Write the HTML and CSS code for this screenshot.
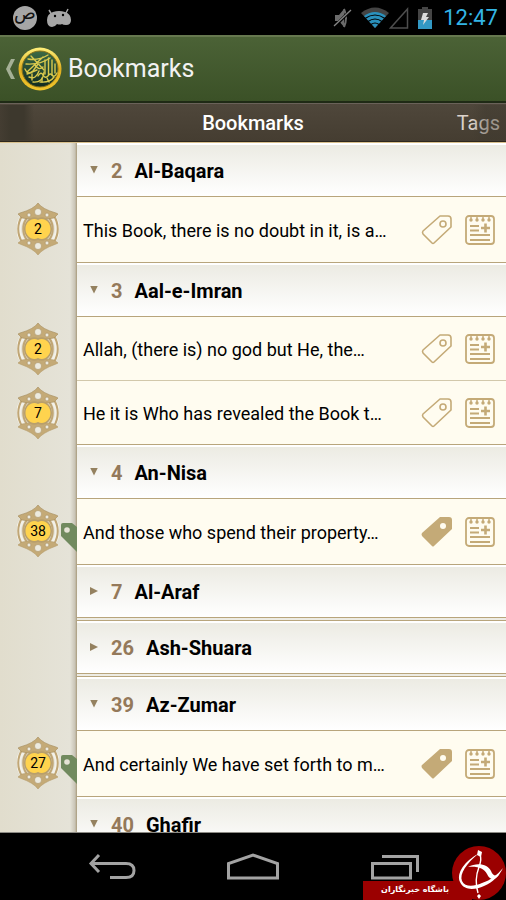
FILE: index.html
```html
<!DOCTYPE html>
<html lang="en">
<head>
    <meta charset="UTF-8">
    <meta name="viewport" content="width=device-width, initial-scale=1.0">
    <title>Bookmarks</title>
    <link rel="stylesheet" href="styles.css">
</head>
<body>
    <!-- shared icons -->
    <svg class="defs" width="0" height="0" aria-hidden="true">
        <symbol id="medal" viewBox="0 0 42 54">
            <path d="M6 15C0 23 0 31 6 39M36 15c6 8 6 16 0 24" fill="none" stroke="#f3f1e8" stroke-width="5"/>
            <g fill="none" stroke="#c0a675" stroke-width="2">
                <path d="M5 14C0 22 0 32 5 40M37 14c5 8 5 18 0 26"/>
                <path d="M10 16C5 22 5 32 10 38M32 16c5 6 5 16 0 22"/>
            </g>
            <path d="M21 1q4 6 18 10l2 1-4 4-7 1q-6 0-9 2-3-2-9-2l-7-1-4-4 2-1Q17 7 21 1z" fill="#c4aa77" stroke="#a58c5c" stroke-width=".6"/>
            <path d="M21 53q4-6 18-11l2-1-4-3-7-1q-6 0-9-2-3 2-9 2l-7 1-4 3 2 1q14 5 18 11z" fill="#c4aa77" stroke="#b39a68" stroke-width=".6"/>
            <path d="M21 16c7-3 14 3 14 11s-7 14-14 11C14 41 7 35 7 27s7-14 14-11z" fill="#b89f6c"/>
            <path d="M21 18c6-3 12.500 2 12.500 9S27 39 21 36c-6 3-12.500-2-12.500-9S15 15 21 18z" fill="#ffd34e"/>
            <g fill="#eceadf" stroke="#a08756" stroke-width=".5">
                <circle cx="21" cy="10" r="3.500"/><circle cx="21" cy="44" r="3.500"/>
                <circle cx="12" cy="13" r="1.900"/><circle cx="30" cy="13" r="1.900"/>
                <circle cx="12" cy="41" r="1.900"/><circle cx="30" cy="41" r="1.900"/>
            </g>
        </symbol>
        <symbol id="tag" viewBox="0 0 32 32">
            <path d="M19 2h8q3 0 3 3v8L13 29q-1 1-2 0l-9-9q-1-2 0-3z" fill="none" stroke="#c4aa77" stroke-width="1.6" stroke-linejoin="round"/>
            <circle cx="22" cy="10" r="3" fill="none" stroke="#c4aa77" stroke-width="1.6"/>
        </symbol>
        <symbol id="tag-full" viewBox="0 0 32 32">
            <path d="M19 1h9q3 0 3 3v9L13 30q-1 1-2 0L1 20q-1-2 0-3z" fill="#c4aa77"/>
            <circle cx="22" cy="10" r="3" fill="#fffcf0"/>
        </symbol>
        <symbol id="note" viewBox="0 0 32 32">
            <g fill="none" stroke="#c4aa77" stroke-width="1.800">
                <rect x="2" y="2" width="28" height="28" rx="3"/>
                <path d="M6 12h9M6 16.500h9M6 21h20M6 26h20"/>
                <path d="M17 14h9M21.500 9.500v9" stroke-width="2.600"/>
                <path d="M7 2v4M13 2v4M19 2v4M25 2v4" stroke-width="1.400"/>
            </g>
            <g fill="#c4aa77"><circle cx="7" cy="6" r="1.700"/><circle cx="13" cy="6" r="1.700"/><circle cx="19" cy="6" r="1.700"/><circle cx="25" cy="6" r="1.700"/></g>
        </symbol>
        <symbol id="flag" viewBox="0 0 17 30">
            <path d="M3 0h9l5 4v25L1 13V2q0-2 2-2z" fill="#718a5e"/>
            <circle cx="7" cy="7" r="2.800" fill="#e6e3d6"/>
        </symbol>
    </svg>

    <div class="statusbar">
        <div class="status-group">
            <span class="sad">ص</span>
            <svg width="26" height="20" viewBox="0 0 26 20">
                <path d="M3 2l3 5M22 1l-3 6" stroke="#a6a6a6" stroke-width="1.500"/>
                <path d="M7 4q6-2 12 0 6 2 6 8 0 5-5 5-3 0-4-1-2 1-5 0-2 3-5 3-5 0-5-7 0-6 6-8z" fill="#a6a6a6"/>
                <circle cx="9" cy="8" r="1.200"/><circle cx="17" cy="7" r="1.200"/>
            </svg>
        </div>
        <div class="status-group">
            <svg class="mute" width="20" height="22" viewBox="0 0 20 22">
                <path d="M2 8h4l5-6v18l-5-6H2z" fill="#6b6b6b"/>
                <path d="M11 2q4 9 0 18" fill="none" stroke="#6b6b6b" stroke-width="2"/>
                <path d="M2 19L18 3" stroke="#000" stroke-width="3"/>
                <path d="M1 19L18 3" stroke="#858585" stroke-width="1.300"/>
            </svg>
            <svg width="28" height="22" viewBox="0 0 28 22">
                <path d="M0 6Q14-5 28 6L14 21z" fill="#444"/>
                <path d="M3 9q11-8 22 0L14 21z" fill="#2a91bd"/>
                <path d="M4 11.500q10-7 20 0M7 14.500q7-5 14 0M10 17.500q4-3 8 0" fill="none" stroke="#000" stroke-width="1.200"/>
            </svg>
            <svg width="20" height="22" viewBox="0 0 20 22"><path d="M1.500 21H18.500V2z" fill="none" stroke="#4e4e4e" stroke-width="1.500"/></svg>
            <svg class="battery" width="16" height="22" viewBox="0 0 16 22">
                <path d="M5 0h6v2h4v11H1V2h4z" fill="#454545"/>
                <path d="M1 13h14v9H1z" fill="#3298c4"/>
                <path d="M6 6h5l-2 4h3l-6 8 1-5H4z" fill="#ddd"/>
            </svg>
            <span class="clock">12:47</span>
        </div>
    </div>

    <header class="actionbar">
        <button class="up" aria-label="Back">
            <svg width="11" height="20" viewBox="0 0 11 20"><path d="M6 0h4L5 10l5 10H6L1 10z" fill="#a5b096"/></svg>
            <svg width="44" height="44" viewBox="0 0 44 44">
                <defs>
                    <linearGradient id="gold" x1="0" y1="0" x2="0" y2="1">
                        <stop offset="0" stop-color="#fff07a"/><stop offset=".5" stop-color="#dfae20"/><stop offset="1" stop-color="#f0c52c"/>
                    </linearGradient>
                    <linearGradient id="disc" x1="0" y1="0" x2="0" y2="1">
                        <stop offset="0" stop-color="#3c6a45"/><stop offset="1" stop-color="#102a20"/>
                    </linearGradient>
                </defs>
                <circle cx="22" cy="22" r="21.500" fill="url(#gold)"/>
                <circle cx="22" cy="22" r="18" fill="url(#disc)" stroke="#8b7319" stroke-width="1"/>
                <g fill="none" stroke="#d9c94e" stroke-width="1.400" stroke-linecap="round">
                    <path d="M10 12q10 2 20-4M8 17q14 1 24-6M13 9l13 14M25 10L9 25"/>
                    <path d="M7 22q3 7 8 2l5-7M11 30q7 3 10-6M15 35q10 1 11-10"/>
                    <path d="M27 13v14M30.500 11v17M34 13v15M37 17v9"/>
                    <path d="M20 29q3-5 5-1t5 1q2-4 5 0 2 1 4-3M22 35q10 1 14-5"/>
                    <path d="M17 18q4 6 8 2M9 27l10-4M24 31v4M29 31l2 4M14 27v6"/>
                </g>
            </svg>
        </button>
        <h1>Bookmarks</h1>
    </header>

    <nav class="tabs">
        <button class="tab active">Bookmarks</button>
        <button class="tab next">Tags</button>
    </nav>

    <main class="list">
        <section>
            <button class="surah" aria-expanded="true"><span class="num">2</span>Al-Baqara</button>
            <div class="ayah">
                <div class="medal"><svg><use href="#medal"/></svg><span>2</span></div>
                <p>This Book, there is no doubt in it, is a…</p>
                <button class="icon" aria-label="Tag"><svg><use href="#tag"/></svg></button>
                <button class="icon" aria-label="Add note"><svg><use href="#note"/></svg></button>
            </div>
        </section>
        <section>
            <button class="surah" aria-expanded="true"><span class="num">3</span>Aal-e-Imran</button>
            <div class="ayah">
                <div class="medal"><svg><use href="#medal"/></svg><span>2</span></div>
                <p>Allah, (there is) no god but He, the…</p>
                <button class="icon" aria-label="Tag"><svg><use href="#tag"/></svg></button>
                <button class="icon" aria-label="Add note"><svg><use href="#note"/></svg></button>
            </div>
            <div class="ayah">
                <div class="medal"><svg><use href="#medal"/></svg><span>7</span></div>
                <p>He it is Who has revealed the Book t…</p>
                <button class="icon" aria-label="Tag"><svg><use href="#tag"/></svg></button>
                <button class="icon" aria-label="Add note"><svg><use href="#note"/></svg></button>
            </div>
        </section>
        <section>
            <button class="surah" aria-expanded="true"><span class="num">4</span>An-Nisa</button>
            <div class="ayah">
                <div class="medal"><svg><use href="#medal"/></svg><span>38</span></div>
                <svg class="flag"><use href="#flag"/></svg>
                <p>And those who spend their property…</p>
                <button class="icon" aria-label="Tag"><svg><use href="#tag-full"/></svg></button>
                <button class="icon" aria-label="Add note"><svg><use href="#note"/></svg></button>
            </div>
        </section>
        <section>
            <button class="surah" aria-expanded="false"><span class="num">7</span>Al-Araf</button>
        </section>
        <section>
            <button class="surah" aria-expanded="false"><span class="num">26</span>Ash-Shuara</button>
        </section>
        <section>
            <button class="surah" aria-expanded="true"><span class="num">39</span>Az-Zumar</button>
            <div class="ayah">
                <div class="medal"><svg><use href="#medal"/></svg><span>27</span></div>
                <svg class="flag"><use href="#flag"/></svg>
                <p>And certainly We have set forth to m…</p>
                <button class="icon" aria-label="Tag"><svg><use href="#tag-full"/></svg></button>
                <button class="icon" aria-label="Add note"><svg><use href="#note"/></svg></button>
            </div>
        </section>
        <section>
            <button class="surah" aria-expanded="true"><span class="num">40</span>Ghafir</button>
        </section>
    </main>

    <footer class="navbar">
        <button aria-label="Back">
            <svg width="52" height="30" viewBox="0 0 52 30"><path d="M14 3L6 11.500 14 20M6 11.500H41q8 0 8 7t-8 7H25" fill="none" stroke="#a3a3a3" stroke-width="3"/></svg>
        </button>
        <button aria-label="Home">
            <svg width="52" height="30" viewBox="0 0 52 30"><path d="M1.500 26V11.500L26 3l24.500 8.500V26z" fill="none" stroke="#a3a3a3" stroke-width="3"/></svg>
        </button>
        <button aria-label="Recent apps">
            <svg width="52" height="30" viewBox="0 0 52 30"><path d="M3.500 11.500H41.500V26H3.500zM13 4.500H48.500V20" fill="none" stroke="#a3a3a3" stroke-width="3"/></svg>
        </button>
    </footer>

    <div class="stamp">
        <span lang="fa" dir="rtl">باشگاه خبرنگاران</span>
        <svg width="54" height="54" viewBox="0 0 54 54">
            <circle cx="27" cy="27" r="27" fill="#9b0000"/>
            <g fill="#fff">
                <path d="M26 8C13 15 4 27 8 36c4 9 15 8 24 4 9-4 15-10 19-18-6 7-12 12-21 15-9 4-17 4-20-2-3-7 5-18 16-27z"/>
                <path d="M16 21c9-5 20-3 23 4 2 5 5 6 9 2-4 8-10 8-13 1-3-6-10-8-19-7z"/>
                <path d="M26 4l4 2-1 5-4-2zM27 48l2 2-2 3-2-3z"/>
            </g>
            <path d="M28 9q2 4-1 12-5 13-1 26" fill="none" stroke="#fff" stroke-width="1.400"/>
        </svg>
    </div>

    <script>
        document.querySelectorAll('.surah').forEach(function (btn) {
            btn.addEventListener('click', function () {
                const open = btn.getAttribute('aria-expanded') === 'true';
                btn.setAttribute('aria-expanded', !open);
            });
        });
    </script>
</body>
</html>
```
FILE: styles.css
```css
* {
    box-sizing: border-box;
}
body {
    margin: 0;
    height: 100vh;
    display: flex;
    flex-direction: column;
    position: relative;
    overflow: hidden;
    background: #000;
    color: #000;
    font-family: Roboto, "Noto Sans", sans-serif;
}
button {
    border: none;
    background: none;
    padding: 0;
    margin: 0;
    font: inherit;
    color: inherit;
    cursor: pointer;
}
svg {
    display: block;
    flex: none;
}
.defs {
    position: absolute;
}

/* status bar */
.statusbar {
    flex: none;
    height: 35px;
    display: flex;
    align-items: center;
    justify-content: space-between;
    padding: 0 8px 0 13px;
}
.status-group {
    display: flex;
    align-items: center;
}
.sad {
    width: 24px;
    height: 24px;
    margin-right: 9px;
    border-radius: 50%;
    background: #a6a6a6;
    color: #111;
    font: 18px/14px "DejaVu Sans", sans-serif;
    text-align: center;
}
.mute {
    margin-right: 8px;
}
.battery {
    margin: 0 10px 0 8px;
}
.clock {
    color: #33b5e5;
    font-size: 22px;
    line-height: 34px;
}

/* title */
.actionbar {
    flex: none;
    height: 68px;
    display: flex;
    align-items: center;
    gap: 6px;
    padding-left: 5px;
    background: linear-gradient(#4b6236, #3b5127);
    border-top: 2px solid #66784f;
    border-bottom: 2px solid #1f2a15;
}
.up {
    display: flex;
    align-items: center;
    gap: 2px;
}
.actionbar h1 {
    margin: 0;
    color: #f2f2f2;
    font-size: 25px;
    font-weight: 400;
    line-height: 34px;
}

/* tabs */
.tabs {
    flex: none;
    height: 39px;
    display: grid;
    grid-template-columns: 1fr auto 1fr;
    align-items: center;
    position: relative;
    background: linear-gradient(#4f473b, #453d31);
    border-top: 1px solid #6a6259;
    border-bottom: 1px solid #2e281e;
    font-size: 20px;
    line-height: 24px;
}
.tabs::before,
.tabs::after {
    content: "";
    position: absolute;
    top: 1px;
    bottom: 1px;
    left: 0;
    width: 34px;
    background: linear-gradient(90deg, #443d32, #3d382d 30%, #3d382d 70%, transparent);
}
.tabs::after {
    left: auto;
    right: 0;
    background: linear-gradient(270deg, #3d382d66 60%, transparent);
}
.tab.active {
    grid-column: 2;
    color: #fff;
    font-weight: 500;
}
.tab.next {
    justify-self: end;
    padding-right: 6px;
    color: #dcd3cb;
}

/* list */
.list {
    flex: 1;
    min-height: 0;
    overflow: hidden;
    padding-left: 77px;
    background: linear-gradient(90deg, #e1ddcd, #e5e3d8 70px, #c9c4b6 75px, #a89a7a 77px, #fffcf0 77px);
    border-top: 1px solid #d9c08c;
    border-bottom: 1px solid #8c8a84;
}
.surah {
    width: 100%;
    height: 54px;
    display: flex;
    align-items: center;
    padding-left: 13px;
    background: linear-gradient(#ecebe3, #fff);
    border-top: 2px solid #fff;
    border-bottom: 1px solid #b8a57c;
    font-size: 20px;
    font-weight: 700;
    line-height: 24px;
}
.surah::before {
    content: "";
    width: 8px;
    height: 8px;
    margin: 0 13px 2px 0;
    background: #94815f;
    clip-path: polygon(0 0, 100% 0, 50% 100%);
}
.surah[aria-expanded="false"]::before {
    clip-path: polygon(0 0, 100% 50%, 0 100%);
}
.surah[aria-expanded="false"] {
    height: 56px;
    border-bottom: 4px double #b8a57c;
}
.num {
    margin-right: 12px;
    color: #94795a;
}
.surah[aria-expanded="false"] ~ .ayah {
    display: none;
}
.ayah {
    position: relative;
    height: 64px;
    display: flex;
    align-items: center;
    gap: 11px;
    padding: 0 10px 0 6px;
    background: #fffcf0;
    border-bottom: 1px solid #d2c8ab;
}
.ayah:last-child {
    border-bottom-color: #b8a57c;
}
.ayah:only-of-type {
    height: 66px;
}
.ayah p {
    flex: 1;
    min-width: 0;
    margin: 0;
    padding-top: 2px;
    overflow: hidden;
    white-space: nowrap;
    font-size: 18px;
    line-height: 28px;
}
.icon svg {
    width: 32px;
    height: 32px;
}
/* verse marker hangs in the left margin */
.medal {
    position: absolute;
    left: -60px;
    top: 5px;
    width: 42px;
    height: 54px;
    display: grid;
    place-items: center;
}
.medal svg,
.medal span {
    grid-area: 1 / 1;
}
.medal svg {
    width: 42px;
    height: 54px;
}
.medal span {
    font-size: 14px;
    line-height: 20px;
}
.flag {
    position: absolute;
    left: -17px;
    top: 24px;
    width: 17px;
    height: 30px;
}

/* system buttons */
.navbar {
    flex: none;
    height: 67px;
    display: flex;
    align-items: center;
    justify-content: center;
    gap: 90px;
}

.stamp {
    position: absolute;
    right: 0;
    bottom: 0;
    display: flex;
    align-items: flex-end;
}
.stamp span {
    height: 19px;
    margin-right: -20px;
    padding: 0 23px 0 18px;
    background: #9b0000;
    color: #fff;
    font: bold 8px/18px "DejaVu Sans", sans-serif;
    white-space: nowrap;
}
```
